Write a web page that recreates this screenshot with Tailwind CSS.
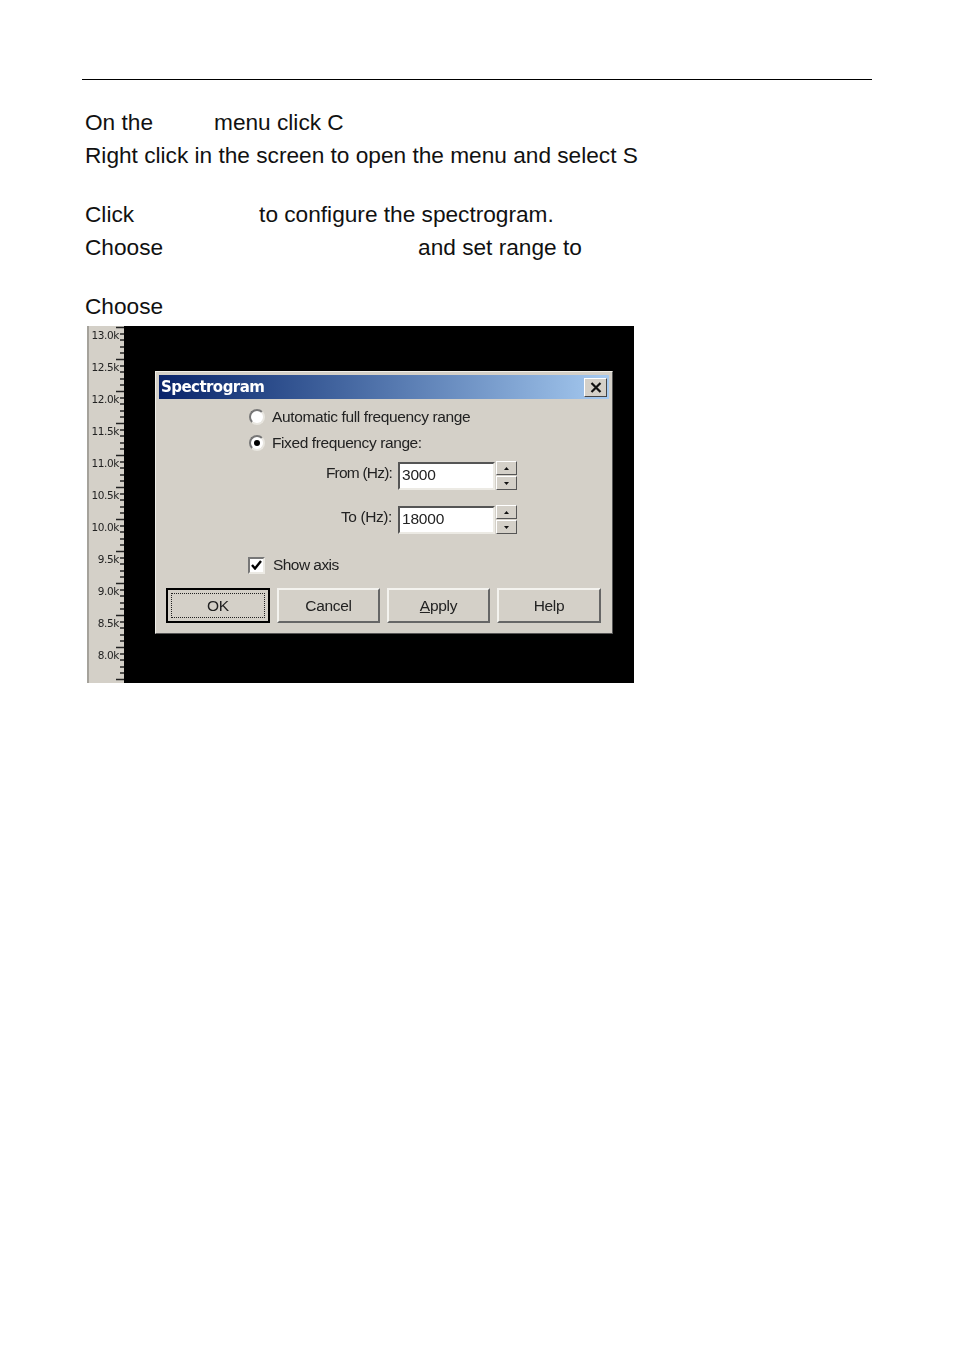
<!DOCTYPE html>
<html lang="en">
<head>
    <meta charset="UTF-8">
    <title>Spectrogram</title>
    <script src="https://cdn.jsdelivr.net/npm/@tailwindcss/browser@4"></script>
</head>
<body class="bg-white text-black font-['Liberation_Sans',Arial,sans-serif]">
<div class="w-[954px] h-[1350px] pt-[79px] pl-[82px] overflow-hidden">
    <div class="w-[790px] h-px bg-black"></div>

    <!-- instructions -->
    <div class="pl-[3px] pt-[26px] text-[22.67px] leading-[33px] text-[#111]">
        <p>On the<span class="ml-[61px]">menu click C</span></p>
        <p>Right click in the screen to open the menu and select S</p>
        <p class="mt-[26px]">Click<span class="ml-[125px]">to configure the spectrogram.</span></p>
        <p>Choose<span class="ml-[255px]">and set range to</span></p>
        <p class="mt-[26px]">Choose</p>
    </div>

    <!-- screenshot -->
    <div class="ml-[5px] mt-[3px] w-[547px] h-[357px] bg-black flex overflow-hidden blur-[0.4px]">
        <!-- ruler -->
        <div class="relative w-[37px] h-full shrink-0 bg-[#d4d0c8] border-l-2 border-[#a5a29b]">
            <svg class="absolute right-0 top-0" width="8" height="357" stroke="#222" stroke-width="1.4">
                <path d="M0 1.5H8M4 8H8M4 14H8M4 21H8M4 27H8M0 33.5H8M4 40H8M4 46H8M4 53H8M4 59H8M0 65.5H8M4 72H8M4 78H8M4 85H8M4 91H8M0 97.5H8M4 104H8M4 110H8M4 117H8M4 123H8M0 129.5H8M4 136H8M4 142H8M4 149H8M4 155H8M0 161.5H8M4 168H8M4 174H8M4 181H8M4 187H8M0 193.5H8M4 200H8M4 206H8M4 213H8M4 219H8M0 225.5H8M4 232H8M4 238H8M4 245H8M4 251H8M0 257.5H8M4 264H8M4 270H8M4 277H8M4 283H8M0 289.5H8M4 296H8M4 302H8M4 309H8M4 315H8M0 321.5H8M4 328H8M4 334H8M4 341H8M4 347H8M0 353.5H8"/>
            </svg>
            <div class="flex flex-col items-end pr-[5px] pt-[2px] text-[10.5px] leading-[14px] gap-[18px] font-['DejaVu_Sans',sans-serif] text-[#222] tracking-[-0.4px]">
                <span>13.0k</span>
                <span>12.5k</span>
                <span>12.0k</span>
                <span>11.5k</span>
                <span>11.0k</span>
                <span>10.5k</span>
                <span>10.0k</span>
                <span>9.5k</span>
                <span>9.0k</span>
                <span>8.5k</span>
                <span>8.0k</span>
            </div>
        </div>

        <!-- dialog -->
        <div class="ml-[31px] mt-[45px] w-[458px] h-[263px] bg-[#d4d0c8] border border-t-[#f0eee8] border-l-[#f0eee8] border-r-[#555] border-b-[#555] p-[3px] text-[#222] text-[15.5px]">
            <div class="h-[24px] flex items-center justify-between pl-[2px] pr-[2px] bg-gradient-to-r from-[#0a246a] to-[#a6caf0]">
                <span class="text-white font-bold text-[15px] font-['DejaVu_Sans',sans-serif] tracking-[-0.55px]">Spectrogram</span>
                <div class="w-[23px] h-[19px] bg-[#d4d0c8] border border-t-white border-l-white border-r-[#444] border-b-[#444] flex items-center justify-center">
                    <svg width="12" height="11" stroke="#111" stroke-width="2.2"><path d="M1.5 1L10.5 10M10.5 1L1.5 10"/></svg>
                </div>
            </div>

            <div class="pl-[90px] pt-[9px]">
                <label class="flex items-center gap-[7px] h-[18px] tracking-[-0.37px]">
                    <span class="w-[16px] h-[16px] rounded-full bg-white border-2 border-t-[#777] border-l-[#777] border-r-[#e8e6e0] border-b-[#e8e6e0]"></span>
                    Automatic full frequency range
                </label>
                <label class="flex items-center gap-[7px] h-[18px] mt-[8px] tracking-[-0.4px]">
                    <span class="w-[16px] h-[16px] rounded-full bg-white border-2 border-t-[#777] border-l-[#777] border-r-[#e8e6e0] border-b-[#e8e6e0] flex items-center justify-center">
                        <span class="w-[6px] h-[6px] rounded-full bg-black"></span>
                    </span>
                    Fixed frequency range:
                </label>
            </div>

            <!-- range fields -->
            <div class="mt-[9px] flex flex-col gap-[15px]">
                <div class="flex items-center h-[29px]">
                    <span class="w-[233px] text-right tracking-[-0.8px] -mt-[5px]">From (Hz):</span>
                    <div class="ml-[6px] w-[97px] h-[28px] bg-white border-2 border-t-[#555] border-l-[#555] border-r-[#eceae4] border-b-[#eceae4] pl-[2px] leading-[22px] tracking-[-0.2px]">3000</div>
                    <div class="ml-px flex flex-col gap-px">
                        <div class="w-[21px] h-[14px] border border-t-white border-l-white border-r-[#555] border-b-[#555] flex items-center justify-center"><svg width="5" height="3" fill="#111"><path d="M2.5 0L5 3H0z"/></svg></div>
                        <div class="w-[21px] h-[14px] border border-t-white border-l-white border-r-[#555] border-b-[#555] flex items-center justify-center"><svg width="5" height="3" fill="#111"><path d="M0 0H5L2.5 3z"/></svg></div>
                    </div>
                </div>
                <div class="flex items-center h-[29px]">
                    <span class="w-[233px] text-right tracking-[-0.4px] -mt-[5px]">To (Hz):</span>
                    <div class="ml-[6px] w-[97px] h-[28px] bg-white border-2 border-t-[#555] border-l-[#555] border-r-[#eceae4] border-b-[#eceae4] pl-[2px] leading-[22px] tracking-[-0.2px]">18000</div>
                    <div class="ml-px flex flex-col gap-px">
                        <div class="w-[21px] h-[14px] border border-t-white border-l-white border-r-[#555] border-b-[#555] flex items-center justify-center"><svg width="5" height="3" fill="#111"><path d="M2.5 0L5 3H0z"/></svg></div>
                        <div class="w-[21px] h-[14px] border border-t-white border-l-white border-r-[#555] border-b-[#555] flex items-center justify-center"><svg width="5" height="3" fill="#111"><path d="M0 0H5L2.5 3z"/></svg></div>
                    </div>
                </div>
            </div>

            <label class="ml-[89px] mt-[22px] flex items-center gap-[8px] h-[18px] tracking-[-0.55px]">
                <span class="w-[17px] h-[17px] bg-white border-2 border-t-[#777] border-l-[#777] border-r-[#eceae4] border-b-[#eceae4] flex items-center justify-center">
                    <svg width="11" height="10" fill="none" stroke="#000" stroke-width="2.4"><path d="M1 5L4 8.5L10 1"/></svg>
                </span>
                Show axis
            </label>

            <!-- buttons -->
            <div class="ml-[7px] mt-[14px] flex gap-[7px] tracking-[-0.3px]">
                <div class="w-[104px] h-[35px] border-2 border-black bg-[#d4d0c8] p-[3px]">
                    <div class="h-full border border-dotted border-[#222] flex items-center justify-center">OK</div>
                </div>
                <div class="w-[103px] h-[35px] border-2 border-t-[#f4f3ef] border-l-[#f4f3ef] border-r-[#666] border-b-[#666] flex items-center justify-center">Cancel</div>
                <div class="w-[103px] h-[35px] border-2 border-t-[#f4f3ef] border-l-[#f4f3ef] border-r-[#666] border-b-[#666] flex items-center justify-center"><span><span class="underline">A</span>pply</span></div>
                <div class="w-[104px] h-[35px] border-2 border-t-[#f4f3ef] border-l-[#f4f3ef] border-r-[#666] border-b-[#666] flex items-center justify-center">Help</div>
            </div>
        </div>
    </div>
</div>
</body>
</html>
